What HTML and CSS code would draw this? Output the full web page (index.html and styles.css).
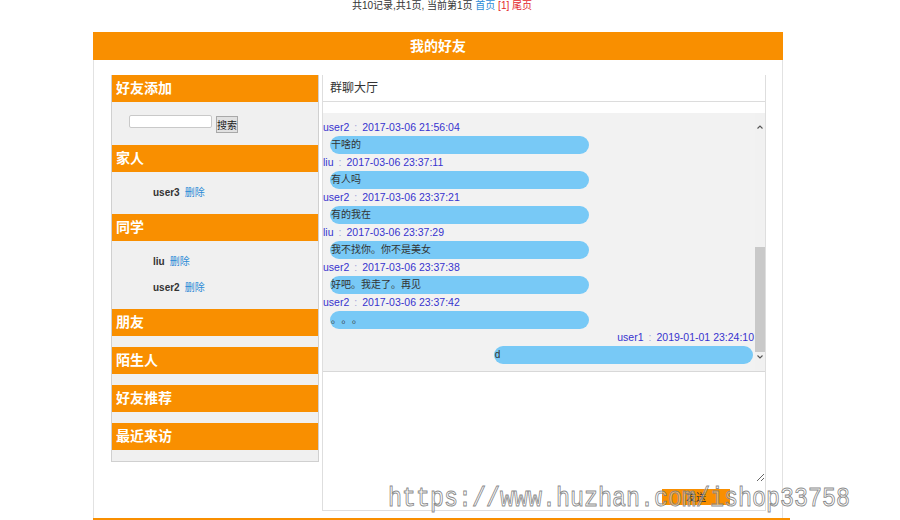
FILE: index.html
```html
<!DOCTYPE html>
<html lang="zh-CN">
<head>
<meta charset="utf-8">
<title>我的好友</title>
<link rel="stylesheet" href="styles.css">
</head>
<body>
<div class="pager">共10记录,共1页, 当前第1页 <a class="blue">首页</a> <a class="red">[1]</a> <a class="red">尾页</a></div>

<div class="wrap">
  <div class="wrap-title">我的好友</div>
  <div class="main">
    <div class="sidebar">
      <div class="sec-head">好友添加</div>
      <div class="search">
        <input class="search-input" type="text">
        <button class="search-btn">搜索</button>
      </div>

      <div class="sec-head">家人</div>
      <ul class="list">
        <li><b>user3</b><a class="del">删除</a></li>
      </ul>

      <div class="sec-head">同学</div>
      <ul class="list">
        <li><b>liu</b><a class="del">删除</a></li>
        <li><b>user2</b><a class="del">删除</a></li>
      </ul>

      <div class="sec-head">朋友</div>
      <div class="empty"></div>
      <div class="sec-head">陌生人</div>
      <div class="empty"></div>
      <div class="sec-head">好友推荐</div>
      <div class="empty"></div>
      <div class="sec-head">最近来访</div>
      <div class="empty"></div>
    </div>

    <div class="panel">
      <div class="panel-title">群聊大厅</div>
      <div class="panel-gap"></div>
      <div class="chat">
        <div class="msgs">
          <div class="meta">user2<span class="colon">:</span>2017-03-06 21:56:04</div>
          <div class="bubble">干啥的</div>
          <div class="meta">liu<span class="colon">:</span>2017-03-06 23:37:11</div>
          <div class="bubble">有人吗</div>
          <div class="meta">user2<span class="colon">:</span>2017-03-06 23:37:21</div>
          <div class="bubble">有的我在</div>
          <div class="meta">liu<span class="colon">:</span>2017-03-06 23:37:29</div>
          <div class="bubble">我不找你。你不是美女</div>
          <div class="meta">user2<span class="colon">:</span>2017-03-06 23:37:38</div>
          <div class="bubble">好吧。我走了。再见</div>
          <div class="meta">user2<span class="colon">:</span>2017-03-06 23:37:42</div>
          <div class="bubble"><span class="dot">。</span><span class="dot">。</span><span class="dot">。</span></div>
          <div class="meta mine">user1<span class="colon">:</span>2019-01-01 23:24:10</div>
          <div class="bubble mine">d</div>
        </div>
        <div class="scrollbar">
          <div class="sb-btn"><svg width="6" height="4" viewBox="0 0 6 4"><polyline points="0.5,3.5 3,1 5.5,3.5" fill="none" stroke="#555" stroke-width="1.1"/></svg></div>
          <div class="sb-track"><div class="sb-thumb"></div></div>
          <div class="sb-btn"><svg width="6" height="4" viewBox="0 0 6 4"><polyline points="0.5,0.5 3,3 5.5,0.5" fill="none" stroke="#555" stroke-width="1.1"/></svg></div>
        </div>
      </div>
      <textarea class="input"></textarea>
      <div class="send-row"><button class="send">发送</button></div>
    </div>
  </div>
  <div class="foot"></div>
</div>

<div class="watermark">https://www.huzhan.com/ishop33758</div>
</body>
</html>
```

FILE: styles.css
```css
* { box-sizing: border-box; }

body {
  margin: 0;
  font-family: "Liberation Sans", "Noto Sans CJK SC", sans-serif;
  color: #333;
  background: #fff;
  width: 900px;
  height: 520px;
  overflow: hidden;
  position: relative;
  text-spacing-trim: space-all;
}

.pager {
  width: 700px;
  margin-left: 92px;
  height: 31px;
  text-align: center;
  font-size: 10px;
  line-height: 11px;
  color: #333;
}
.pager a { text-decoration: none; }
.blue { color: #2a8ad6; }
.red { color: #e3262b; }

.wrap {
  margin-left: 93px;
  width: 697px;
  margin-top: 1px;
}

.wrap-title {
  width: 690px;
  height: 28px;
  line-height: 28px;
  background: #f98f00;
  color: #fff;
  font-size: 14px;
  font-weight: bold;
  text-align: center;
}

.main {
  width: 690px;
  height: 458px;
  border-left: 1px solid #e2e2e2;
  border-right: 1px solid #e2e2e2;
  padding: 15px 16px 0 17px;
  display: flex;
  align-items: flex-start;
}

.foot {
  width: 697px;
  height: 2px;
  background: #f98f00;
}

/* sidebar */
.sidebar {
  width: 208px;
  background: #f0f0f0;
  border: 1px solid #d0d0d0;
  border-top: none;
}

.sec-head {
  height: 27px;
  line-height: 27px;
  background: #f98f00;
  color: #fff;
  font-size: 14px;
  font-weight: bold;
  padding-left: 4px;
}

.search {
  height: 43px;
  padding: 13px 0 0 17px;
  display: flex;
  align-items: flex-start;
}
.search-input {
  width: 83px;
  height: 13px;
  border: 1px solid #c9c9c9;
  border-radius: 2px;
  background: #fff;
  padding: 0;
  margin: 0;
}
.search-btn {
  margin: 1px 0 0 4px;
  width: 22px;
  height: 17px;
  padding: 0;
  font-size: 10px;
  font-family: "Noto Sans CJK SC", sans-serif;
  color: #222;
  background: #e1e1e1;
  border: 1px solid #a9a9a9;
  line-height: 15px;
}

.list {
  list-style: none;
  margin: 0;
  padding: 8px 0 8px;
}
.list li {
  height: 26px;
  line-height: 26px;
  padding-left: 41px;
  font-size: 10px;
}
.list b { color: #333; }
.del {
  margin-left: 5px;
  font-size: 10px;
  color: #2a8ad6;
}

.empty { height: 11px; }

/* panel */
.panel {
  width: 444px;
  margin-left: 3px;
  border-left: 1px solid #dedede;
  border-right: 1px solid #dedede;
  border-bottom: 1px solid #dedede;
  display: flex;
  flex-direction: column;
}

.panel-title {
  height: 27px;
  line-height: 26px;
  padding-left: 7px;
  font-size: 12px;
  color: #333;
  border-bottom: 1px solid #dcdcdc;
}
.panel-gap { height: 11px; }

.chat {
  height: 258px;
  background: #f2f2f2;
  display: flex;
}
.msgs {
  flex: 1;
  overflow: hidden;
  padding-top: 6px;
  display: flex;
  flex-direction: column;
}
.meta {
  height: 17px;
  line-height: 17px;
  font-size: 10.5px;
  color: #3733cf;
}
.colon {
  display: inline-block;
  width: 13px;
  text-align: center;
  color: #a5a5d8;
}
.meta.mine { text-align: right; padding-right: 1px; }
.bubble {
  width: 60%;
  height: 18px;
  line-height: 18px;
  margin-left: 7px;
  padding-left: 1px;
  border-radius: 9px;
  background: #78c9f6;
  font-size: 10px;
  color: #333;
  white-space: nowrap;
}
.dot {
  display: inline-block;
  width: 10.5px;
}
.bubble.mine { margin-left: auto; margin-right: 2px; }

.scrollbar {
  width: 10px;
  display: flex;
  flex-direction: column;
  padding: 9px 0;
  background: #f1f1f1;
}
.sb-btn {
  height: 10px;
  display: flex;
  align-items: center;
  justify-content: center;
}
.sb-track { flex: 1; padding-top: 115px; }
.sb-thumb { height: 105px; background: #c9c9c9; }

.input {
  display: block;
  width: 100%;
  height: 111px;
  border: none;
  border-top: 1px solid #d8d8d8;
  margin: 0;
  resize: vertical;
  background: #fff;
  outline: none;
}

.send-row {
  height: 28px;
  display: flex;
  justify-content: flex-end;
  padding: 7px 35px 0 0;
}
.send {
  width: 68px;
  height: 16px;
  padding: 0;
  border: none;
  background: #f98f00;
  color: #333;
  font-size: 10px;
  font-family: "Noto Sans CJK SC", sans-serif;
  line-height: 16px;
}

.watermark {
  position: absolute;
  left: 388px;
  top: 485px;
  font-family: "Liberation Mono", monospace;
  font-size: 28px;
  line-height: 28px;
  white-space: nowrap;
  color: rgba(255, 255, 255, 0.4);
  -webkit-text-stroke: 1px rgba(125, 125, 125, 0.9);
  transform: scaleX(0.8333);
  transform-origin: left top;
  pointer-events: none;
}
```
